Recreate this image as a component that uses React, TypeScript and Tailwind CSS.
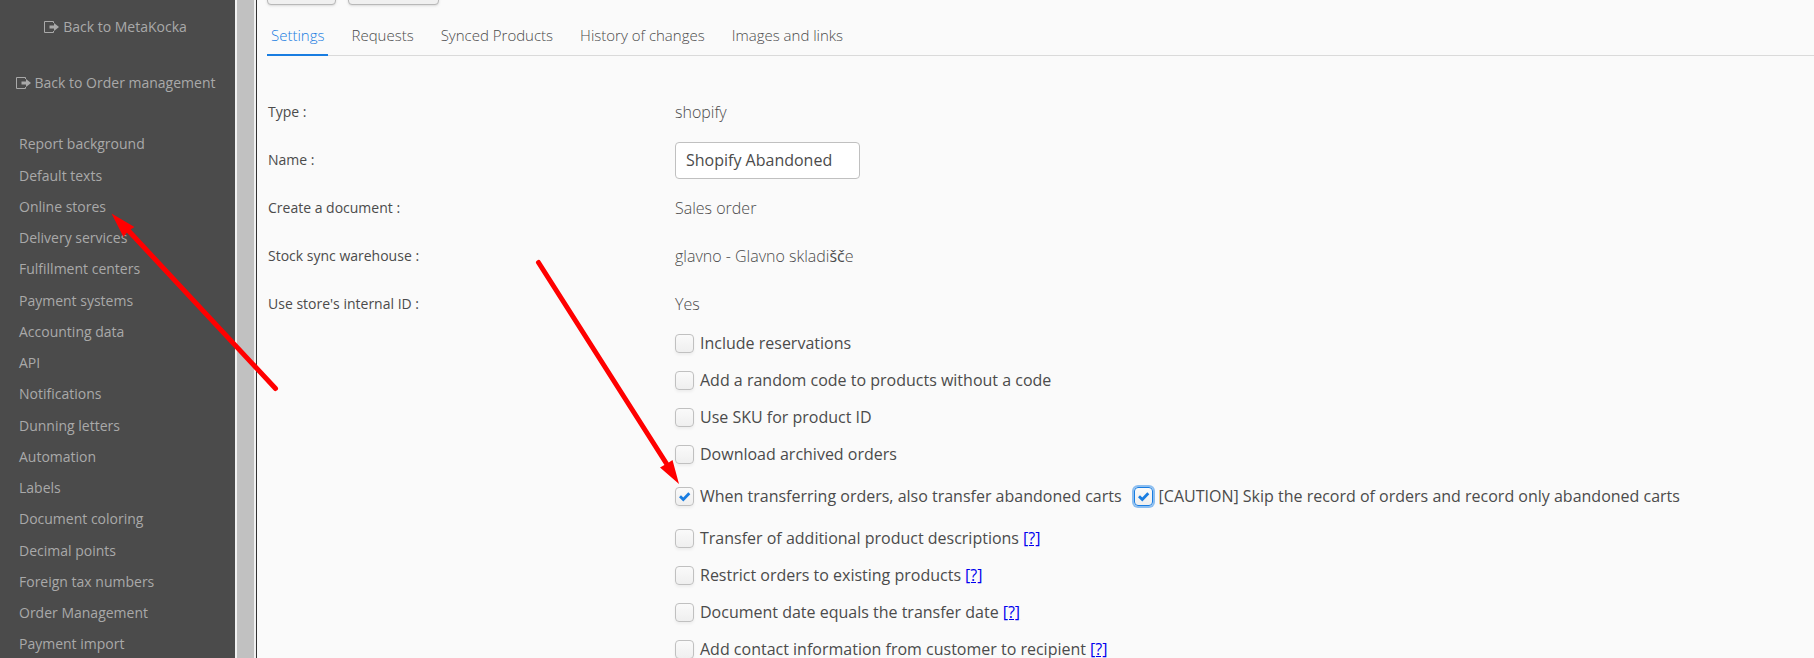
import { useState } from "react"

const menuItems = [
  "Report background",
  "Default texts",
  "Online stores",
  "Delivery services",
  "Fulfillment centers",
  "Payment systems",
  "Accounting data",
  "API",
  "Notifications",
  "Dunning letters",
  "Automation",
  "Labels",
  "Document coloring",
  "Decimal points",
  "Foreign tax numbers",
  "Order Management",
  "Payment import",
]

const tabs = ["Settings", "Requests", "Synced Products", "History of changes", "Images and links"]

function ExitIcon() {
  return (
    <svg className="w-[15px] h-3 shrink-0" viewBox="0 0 15 12" fill="none">
      <path d="M9.500 2V.5H.5v11h9V10" stroke="currentColor" />
      <path d="M5.500 4.500H10V2l5 4-5 4V7.500H5.500z" fill="currentColor" />
    </svg>
  )
}

function BackLink({ label }: { label: string }) {
  return (
    <a href="#" className="flex items-center justify-center gap-1 h-6 mb-8 pr-1 text-sm">
      <ExitIcon />
      {label}
    </a>
  )
}

function Sidebar() {
  return (
    <aside className="w-[235px] shrink-0 bg-[#4b4b4b] text-[#a9a9a9] pt-[15px] whitespace-nowrap">
      <BackLink label="Back to MetaKocka" />
      <BackLink label="Back to Order management" />
      <nav className="pl-[19px] pt-1">
        <ul>
          {menuItems.map((item) => (
            <li key={item} className="h-[31px] nth-[4n+1]:h-8">
              <a href="#" className="text-sm leading-6">
                {item}
              </a>
            </li>
          ))}
        </ul>
      </nav>
    </aside>
  )
}

function Field({ label, htmlFor, children }: { label: string; htmlFor?: string; children: React.ReactNode }) {
  return (
    <div className="flex items-center h-12">
      <label htmlFor={htmlFor} className="w-[407px] shrink-0 text-sm">
        {label} :
      </label>
      {children}
    </div>
  )
}

function Value({ children }: { children: React.ReactNode }) {
  return <span className="font-light">{children}</span>
}

type CheckProps = { label: string; checked?: boolean; focused?: boolean; help?: boolean }

function Check({ label, checked = false, focused = false, help = false }: CheckProps) {
  const [on, setOn] = useState(checked)
  return (
    <div className="flex items-center">
      <label className="flex items-center gap-[6px]">
        <span className="relative flex w-[19px] h-[19px]">
          <input
            type="checkbox"
            checked={on}
            onChange={() => setOn(!on)}
            className={
              "appearance-none w-full h-full rounded border bg-gradient-to-b from-[#fafafa] to-[#efefef] " +
              (focused
                ? "border-[#197de1] shadow-[0_0_0_2px_#8cbef0]"
                : "border-[#c0c0c0] shadow-[0_2px_3px_rgba(0,0,0,0.05)]")
            }
          />
          {on && (
            <svg className="absolute inset-0 pointer-events-none" viewBox="0 0 19 19" fill="none">
              <path d="M5 9.2l3.3 3.3 6-6.2" stroke="#197de1" strokeWidth="2.8" />
            </svg>
          )}
        </span>
        {label}
      </label>
      {help && (
        <a href="#" className="ml-1 text-[#0000ee] underline">
          [?]
        </a>
      )}
    </div>
  )
}

function Arrows() {
  return (
    <svg className="absolute top-0 left-0 w-[700px] h-[500px] pointer-events-none" viewBox="0 0 700 500">
      <g stroke="#f00" strokeWidth="5" strokeLinecap="round">
        <path d="M275.500 388.500L126 228" />
        <path d="M538.500 262.500L668 466" />
      </g>
      <path d="M111.500 213.500L134.500 227L128 231L123.500 237z" fill="#f00" />
      <path d="M679 484L672.500 460L668 463L660 467.500z" fill="#f00" />
    </svg>
  )
}

export default function App() {
  const [name, setName] = useState("Shopify Abandoned")

  return (
    <div className="relative flex h-screen overflow-hidden bg-[#fafafa] text-[#4b4b4b] text-base font-['Open_Sans',sans-serif]">
      <Sidebar />
      <div className="w-[21px] shrink-0 bg-[#c1c1c1] border-x-2 border-[#f1f1f1]" />

      <main className="flex-1 min-w-0 border-l border-[#323232] pl-[10px] whitespace-nowrap">
        <div className="flex gap-3 -mt-8">
          <button aria-label="Save" className="w-[69px] h-[37px] rounded border border-[#b8b8b8] bg-[#f0f0f0] shadow-sm" />
          <button aria-label="Cancel" className="w-[91px] h-[37px] rounded border border-[#b8b8b8] bg-[#f0f0f0] shadow-sm" />
        </div>

        <div className="flex gap-[19px] h-[51px] shadow-[inset_0_-1px_0_#dadada]">
          {tabs.map((tab, i) => (
            <button
              key={tab}
              className={
                i === 0
                  ? "px-1 pt-3 text-[15px] font-light border-b-2 border-[#197de1] text-[#197de1]"
                  : "px-1 pt-[10px] text-[15px] font-light"
              }
            >
              {tab}
            </button>
          ))}
        </div>

        <form className="pl-px pt-8">
          <Field label="Type">
            <Value>shopify</Value>
          </Field>
          <Field label="Name" htmlFor="name">
            <input
              id="name"
              value={name}
              onChange={(e) => setName(e.target.value)}
              className="w-[185px] h-[37px] px-[10px] rounded border border-[#c0c0c0] bg-white"
            />
          </Field>
          <Field label="Create a document">
            <Value>Sales order</Value>
          </Field>
          <Field label="Stock sync warehouse">
            <Value>
              glavno - Glavno skladi<span className="font-normal">šč</span>e
            </Value>
          </Field>
          <Field label="Use store's internal ID">
            <Value>Yes</Value>
          </Field>

          <div className="ml-[407px] mt-[3px] flex flex-col gap-[13px]">
            <Check label="Include reservations" />
            <Check label="Add a random code to products without a code" />
            <Check label="Use SKU for product ID" />
            <Check label="Download archived orders" />
            <div className="flex gap-3 my-[5px]">
              <Check label="When transferring orders, also transfer abandoned carts" checked />
              <Check label="[CAUTION] Skip the record of orders and record only abandoned carts" checked focused />
            </div>
            <Check label="Transfer of additional product descriptions" help />
            <Check label="Restrict orders to existing products" help />
            <Check label="Document date equals the transfer date" help />
            <Check label="Add contact information from customer to recipient" help />
          </div>
        </form>
      </main>

      <Arrows />
    </div>
  )
}
